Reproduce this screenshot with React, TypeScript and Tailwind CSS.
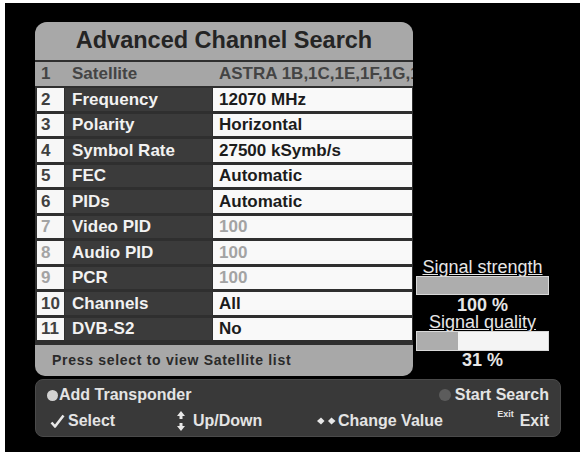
import React from 'react';

type Row = { n: string; label: string; value: string; dim?: boolean };

const rows: Row[] = [
  { n: '2', label: 'Frequency', value: '12070 MHz' },
  { n: '3', label: 'Polarity', value: 'Horizontal' },
  { n: '4', label: 'Symbol Rate', value: '27500 kSymb/s' },
  { n: '5', label: 'FEC', value: 'Automatic' },
  { n: '6', label: 'PIDs', value: 'Automatic' },
  { n: '7', label: 'Video PID', value: '100', dim: true },
  { n: '8', label: 'Audio PID', value: '100', dim: true },
  { n: '9', label: 'PCR', value: '100', dim: true },
  { n: '10', label: 'Channels', value: 'All' },
  { n: '11', label: 'DVB-S2', value: 'No' },
];

const SignalBar: React.FC<{ pct: number }> = ({ pct }) => (
  <div className="w-full h-full bg-[#f4f4f4] border border-[#d8d8d8] flex">
    <div className="h-full bg-[#adadad]" style={{ width: `${pct}%` }} />
  </div>
);

const App: React.FC = () => {
  return (
    <div className="w-[584px] h-[456px] bg-white pt-[3px] pl-[5px] font-['Liberation_Sans',Arial,sans-serif]">
      <div className="w-[575px] h-[449px] bg-black pt-[19px] pl-[30px]">
        <div className="flex">
          {/* main menu panel */}
          <div className="w-[378px] h-[354px] bg-[#2f2f2f] rounded-[12px] flex flex-col">
            <div className="h-[38px] bg-[#a8a8a8] rounded-t-[12px] flex items-center justify-center text-[23.5px] font-bold text-[#242424]">
              Advanced Channel Search
            </div>
            <div className="h-[2px]" />
            <div className="h-[24px] bg-[#a6a6a6] flex items-center text-[17px] font-bold text-[#444] overflow-hidden whitespace-nowrap">
              <span className="w-[30px] pl-[6px] shrink-0">1</span>
              <span className="w-[148px] pl-[7px] shrink-0">Satellite</span>
              <span className="pl-[6px]">ASTRA 1B,1C,1E,1F,1G,1H</span>
            </div>
            <div className="flex flex-col gap-[3px] mt-[2px] pl-[2px] pr-[1px]">
              {rows.map((r) => (
                <div key={r.n} className="h-[22.5px] flex gap-[1px] text-[17px] font-bold leading-none">
                  <div className={`w-[27px] bg-[#f7f7f7] flex items-center pl-[4px] ${r.dim ? 'text-[#a3a3a3]' : 'text-[#404040]'}`}>
                    {r.n}
                  </div>
                  <div className="w-[147px] bg-[#3b3b3b] flex items-center pl-[7px] text-[#f2f2f2]">
                    {r.label}
                  </div>
                  <div className={`flex-1 bg-[#f9f9f9] flex items-center pl-[6px] ${r.dim ? 'text-[#a3a3a3]' : 'text-[#1c1c1c]'}`}>
                    {r.value}
                  </div>
                </div>
              ))}
            </div>
            <div className="mt-[5px] h-[31px] bg-[#a8a8a8] rounded-b-[10px] flex items-center pl-[17px] text-[14px] font-bold tracking-[0.7px] text-[#2a2a2a]">
              Press select to view Satellite list
            </div>
          </div>

          {/* signal meters */}
          <div className="ml-[3px] w-[133px] pt-[237px] flex flex-col items-center text-[#e6e6e6]">
            <div className="h-[16px] text-[18px] leading-[16px] underline underline-offset-[1px]">Signal strength</div>
            <div className="w-full h-[19px] mt-[1px]">
              <SignalBar pct={100} />
            </div>
            <div className="h-[16px] mt-[2px] text-[18px] leading-[16px] font-bold">100 %</div>
            <div className="h-[16px] mt-[1px] text-[18px] leading-[16px] underline underline-offset-[1px]">Signal quality</div>
            <div className="w-full h-[20px] mt-[1px]">
              <SignalBar pct={31} />
            </div>
            <div className="h-[16px] mt-[1px] text-[18px] leading-[16px] font-bold">31 %</div>
          </div>
        </div>

        {/* help bar */}
        <div className="mt-[3px] w-[526px] h-[58px] bg-[#393939] border border-[#4a4a4a] rounded-[8px] pt-[6px] px-[11px] flex flex-col gap-[8px] text-[16px] font-bold text-[#e4e4e4]">
          <div className="h-[18px] flex items-center justify-between leading-none">
            <div className="flex items-center gap-[1px]">
              <span className="w-[11px] h-[11px] rounded-full bg-[#d2d2d2]" />
              <span>Add Transponder</span>
            </div>
            <div className="flex items-center gap-[4px]">
              <span className="w-[12px] h-[12px] rounded-full bg-[#5c5c5c]" />
              <span>Start Search</span>
            </div>
          </div>
          <div className="h-[18px] flex items-center leading-none">
            <div className="w-[130px] pl-[3px] flex items-center gap-[3px]">
              <svg width="15" height="14" viewBox="0 0 15 14">
                <path d="M1.5 8.5 L5 12.5 L13.5 1.5" fill="none" stroke="#e8e8e8" strokeWidth="2.6" strokeLinejoin="round" />
              </svg>
              <span>Select</span>
            </div>
            <div className="w-[140px] flex items-center gap-[8px]">
              <svg width="8" height="20" viewBox="0 0 8 20">
                <polygon points="4,0 8,5 5.5,5 5.5,8 2.5,8 2.5,5 0,5" fill="#e8e8e8" />
                <polygon points="2.5,12 5.5,12 5.5,15 8,15 4,20 0,15 2.5,15" fill="#e8e8e8" />
              </svg>
              <span>Up/Down</span>
            </div>
            <div className="flex items-center gap-[1px]">
              <svg width="20" height="10" viewBox="0 0 20 10">
                <polygon points="0,5 4,1.5 7.5,5 4,8.5" fill="#e8e8e8" />
                <polygon points="11,5 14.5,1.5 18.5,5 14.5,8.5" fill="#e8e8e8" />
              </svg>
              <span>Change Value</span>
            </div>
            <div className="flex-1" />
            <div className="flex items-start gap-[6px]">
              <span className="text-[9px] leading-none -mt-[3px]">Exit</span>
              <span>Exit</span>
            </div>
          </div>
        </div>
      </div>
    </div>
  );
};

export default App;
